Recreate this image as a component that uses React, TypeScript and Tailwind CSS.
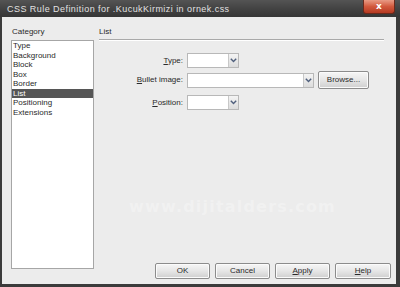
import React from "react";

function Chevron() {
  return (
    <svg width="7" height="5" viewBox="0 0 7 5">
      <path d="M0.8 0.8 L3.5 3.6 L6.2 0.8" fill="none" stroke="#4f5f7c" strokeWidth="1.4" />
    </svg>
  );
}

function Select({ w }: { w: string }) {
  return (
    <div className={`${w} h-[15px] bg-white border border-[#b8b8b8] flex justify-end items-stretch`}>
      <div className="w-[10px] border-l border-[#c8c8c8] bg-gradient-to-b from-[#f4f4f4] to-[#dcdcdc] flex items-center justify-center">
        <Chevron />
      </div>
    </div>
  );
}

function Btn({ children, w = "w-[55px]", h = "h-[16px]" }: { children: React.ReactNode; w?: string; h?: string }) {
  return (
    <div
      className={`${w} ${h} rounded-[2px] border border-[#8c8c8c] bg-gradient-to-b from-[#f6f6f6] via-[#e6e6e6] to-[#cfcfcf] flex items-center justify-center text-[8px] text-[#2a2a2a] shadow-[inset_0_0_0_1px_#fbfbfb]`}
    >
      {children}
    </div>
  );
}

export default function App() {
  const items = ["Type", "Background", "Block", "Box", "Border", "List", "Positioning", "Extensions"];
  return (
    <div className="w-[400px] h-[287px] bg-[#3b3b3b] flex flex-col font-['Liberation_Sans',Arial,sans-serif] overflow-hidden">
      <div className="h-[17px] relative flex items-center pl-[7px] bg-gradient-to-b from-[#545454] via-[#434343] to-[#363636]">
        <span className="text-[9px] leading-[10px] text-[#e2e2e2] tracking-[0.45px]">
          CSS Rule Definition for .KucukKirmizi in ornek.css
        </span>
        <div className="absolute right-[5px] top-0 w-[32px] h-[14px] rounded-b-[3px] border border-t-0 border-[#6b2a1c] bg-gradient-to-b from-[#e89a84] via-[#d2593d] to-[#b63a22] flex items-center justify-center">
          <span className="text-white text-[9px] font-bold leading-none font-['DejaVu_Sans',sans-serif]">x</span>
        </div>
      </div>
      <div className="flex-1 ml-[2px] mr-[4px] mb-[3px] bg-[#ececec] flex relative text-[8px] text-[#2a2a2a]">
        <div className="ml-[9px] flex flex-col pt-[9px]">
          <div className="h-[12px] leading-[12px] pl-[1px]">Category</div>
          <div className="mt-[2px] w-[83px] h-[229px] bg-white border border-[#a6a6a6] flex flex-col">
            {items.map((it) => (
              <div
                key={it}
                className={`h-[9.5px] leading-[9.5px] pl-[1px] ${it === "List" ? "bg-[#565656] text-white" : ""}`}
              >
                {it}
              </div>
            ))}
          </div>
        </div>
        <div className="ml-[5px] mr-[5px] flex-1 flex flex-col pt-[9px]">
          <div className="h-[12px] leading-[12px]">List</div>
          <div className="mr-[7px] h-[1px] mt-[1px] bg-[#a9a9a9]" />
          <div className="mr-[7px] h-[1px] bg-white" />
          <div className="flex items-center mt-[12px]">
            <div className="w-[84px] text-right">
              <span className="underline">T</span>ype:
            </div>
            <div className="ml-[4px]">
              <Select w="w-[52px]" />
            </div>
          </div>
          <div className="flex items-center mt-[3px] h-[18px]">
            <div className="w-[84px] text-right">
              <span className="underline">B</span>ullet image:
            </div>
            <div className="ml-[4px]">
              <Select w="w-[127px]" />
            </div>
            <div className="ml-[4px]">
              <Btn w="w-[51px]" h="h-[18px]">Browse...</Btn>
            </div>
          </div>
          <div className="flex items-center mt-[6px]">
            <div className="w-[84px] text-right">
              <span className="underline">P</span>osition:
            </div>
            <div className="ml-[4px]">
              <Select w="w-[52px]" />
            </div>
          </div>
          <div className="flex-1" />
          <div className="flex justify-end gap-[5px] mb-[5px]">
            <Btn>OK</Btn>
            <Btn>Cancel</Btn>
            <Btn>
              <span>
                <span className="underline">A</span>pply
              </span>
            </Btn>
            <Btn w="w-[56px]">
              <span>
                <span className="underline">H</span>elp
              </span>
            </Btn>
          </div>
        </div>
        <div className="absolute left-[127px] top-[182px] text-[16px] font-bold font-['DejaVu_Sans',sans-serif] text-white/30 tracking-[1.2px] leading-none pointer-events-none">
          www.dijitalders.com
        </div>
      </div>
    </div>
  );
}
